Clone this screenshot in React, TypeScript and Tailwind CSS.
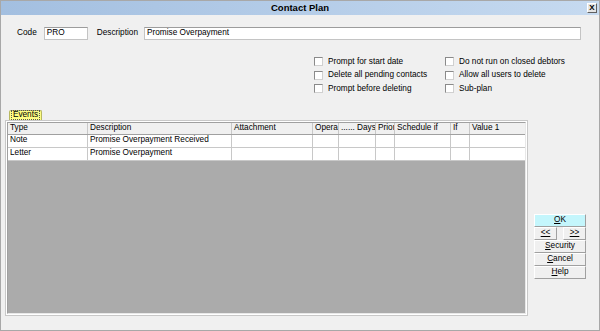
const columns = [
  { name: "Type", w: "w-[80px]" },
  { name: "Description", w: "w-[144px]" },
  { name: "Attachment", w: "w-[81px]" },
  { name: "Opera", w: "w-[26px]" },
  { name: "...... Days", w: "w-[37px]" },
  { name: "Prior", w: "w-[19px]" },
  { name: "Schedule if", w: "w-[56px]" },
  { name: "If", w: "w-[19px]" },
  { name: "Value 1", w: "w-[56px]" },
];

const rows = [
  ["Note", "Promise Overpayment Received", "", "", "", "", "", "", ""],
  ["Letter", "Promise Overpayment", "", "", "", "", "", "", ""],
];

function Check({ label }: { label: string }) {
  return (
    <div className="flex items-center h-[13.5px] gap-[5px]">
      <span className="w-[9px] h-[9px] bg-white border border-[#8a8a8a] border-b-[#d0d0d0] border-r-[#d0d0d0]" />
      <span>{label}</span>
    </div>
  );
}

function Btn({ children, ok }: { children: React.ReactNode; ok?: boolean }) {
  return (
    <button
      className={
        "h-[13px] w-full flex items-center justify-center leading-none border border-white border-b-[#a0a0a0] border-r-[#a0a0a0] " +
        (ok ? "bg-[#c4f6fc]" : "bg-[#f0f0f0]")
      }
    >
      {children}
    </button>
  );
}

export default function App() {
  return (
    <div className="w-[600px] h-[331px] bg-[#f0f0f0] border border-[#a8a8a8] flex flex-col font-['Liberation_Sans',Arial,sans-serif] text-[8.25px] text-black overflow-hidden">
      {/* title bar */}
      <div className="h-[14px] shrink-0 flex items-center bg-gradient-to-r from-[#a3bfe0] to-[#c6daf0] px-[2px]">
        <div className="w-[10px]" />
        <div className="flex-1 text-center font-bold text-[9.5px] leading-none">Contact Plan</div>
        <div className="w-[10px] h-[10px] bg-[#e4e4e4] border border-white border-b-[#606060] border-r-[#606060] flex items-center justify-center text-[8px] font-bold leading-none">
          X
        </div>
      </div>

      {/* code / description */}
      <div className="flex items-center pt-[12px] pl-[16px] pr-[18px]">
        <span className="mr-[7px]">Code</span>
        <div className="w-[44px] h-[13px] bg-white border border-[#c4c4c4] border-t-[#9c9c9c] pl-[2px] flex items-center">PRO</div>
        <span className="ml-[9px] mr-[6px]">Description</span>
        <div className="flex-1 h-[13px] bg-white border border-[#c4c4c4] border-t-[#9c9c9c] pl-[2px] flex items-center">
          Promise Overpayment
        </div>
      </div>

      {/* options */}
      <div className="grid grid-cols-[131px_auto] pl-[313px] mt-[15px]">
        <div className="flex flex-col">
          <Check label="Prompt for start date" />
          <Check label="Delete all pending contacts" />
          <Check label="Prompt before deleting" />
        </div>
        <div className="flex flex-col">
          <Check label="Do not run on closed debtors" />
          <Check label="Allow all users to delete" />
          <Check label="Sub-plan" />
        </div>
      </div>

      {/* events + buttons */}
      <div className="flex mt-[14px] pl-[4px]">
        <div className="w-[523px] flex flex-col">
          <div className="ml-[4px] w-[33px] h-[10px] bg-[#fdfd84] border border-b-0 border-[#b8b860] rounded-t-[2px] flex items-center justify-center">
            <span className="outline outline-1 outline-dotted outline-[#555] px-[1px] leading-[8px]">Events</span>
          </div>
          <div className="h-[196px] border border-[#c8c8c8] bg-white p-[1px] flex">
            <div className="flex-1 flex flex-col border border-[#a0a0a0] border-r-[#e8e8e8] border-b-[#e8e8e8] bg-[#ababab] overflow-hidden">
              <div className="flex h-[12px] bg-[#f0f0f0] border-b border-[#a0a0a0] shrink-0">
                {columns.map((c) => (
                  <div
                    key={c.name}
                    className={c.w + " shrink-0 border-r border-[#c8c8c8] pl-[2px] flex items-center whitespace-nowrap overflow-hidden"}
                  >
                    {c.name}
                  </div>
                ))}
              </div>
              {rows.map((r, i) => (
                <div key={i} className="flex h-[13px] bg-white border-b border-[#c8c8c8] shrink-0">
                  {r.map((cell, j) => (
                    <div
                      key={j}
                      className={columns[j].w + " shrink-0 border-r border-[#c8c8c8] pl-[2px] flex items-center whitespace-nowrap overflow-hidden"}
                    >
                      {cell}
                    </div>
                  ))}
                </div>
              ))}
              <div className="flex-1" />
            </div>
          </div>
        </div>

        <div className="ml-[6px] w-[52px] mt-[104px] flex flex-col">
          <Btn ok>
            <span className="underline">O</span>K
          </Btn>
          <div className="flex justify-between">
            <div className="w-[23px]">
              <Btn>
                <span className="underline">&lt;&lt;</span>
              </Btn>
            </div>
            <div className="w-[23px]">
              <Btn>
                <span className="underline">&gt;&gt;</span>
              </Btn>
            </div>
          </div>
          <Btn>
            <span className="underline">S</span>ecurity
          </Btn>
          <Btn>
            <span className="underline">C</span>ancel
          </Btn>
          <Btn>
            <span className="underline">H</span>elp
          </Btn>
        </div>
      </div>
    </div>
  );
}
